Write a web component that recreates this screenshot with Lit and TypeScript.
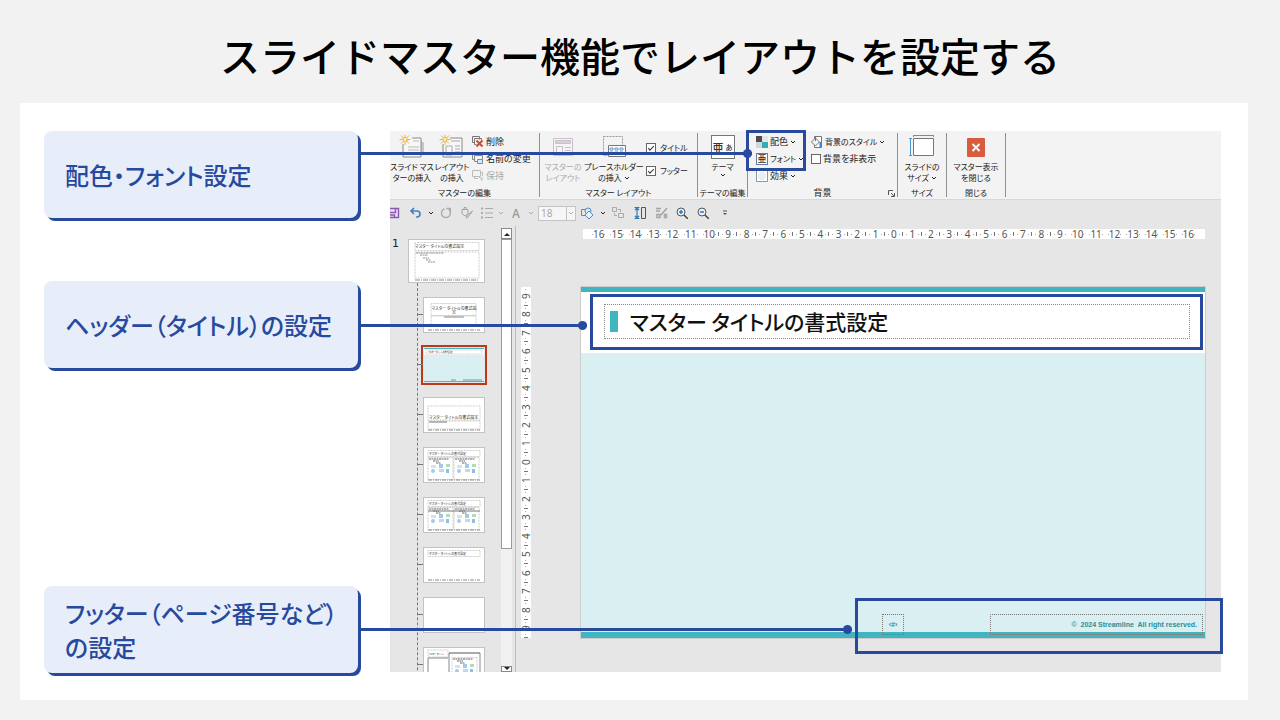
import { LitElement, html, svg, css } from "lit";
import { customElement } from "lit/decorators.js";

const chevron = () => html`<svg class="chev" viewBox="0 0 6 6" width="6" height="6"><path d="M1 2l2 2 2-2" fill="none" stroke="currentColor"/></svg>`;

const icons = {
  slideInsert: () => html`<svg viewBox="0 0 26 24" width="26" height="24">
    <path d="M7 5h15v14h2V7" fill="none" stroke="#999"/><path d="M4 9v13h18V3h-9" fill="#f7f7f7" stroke="#8a8a8a"/>
    <path d="M14 6h6M9 12h11M9 15h11M9 18h11" stroke="#bbb"/>${spark()}</svg>`,
  layoutInsert: () => html`<svg viewBox="0 0 26 24" width="26" height="24">
    <path d="M4 9v13h19V3H11" fill="#f7f7f7" stroke="#8a8a8a"/>
    <path d="M12 6h9M7 11h6v9H7zM16 11h5M16 14h5M16 17h5" stroke="#aaa" fill="none"/>${spark()}</svg>`,
  masterLayout: () => html`<svg viewBox="0 0 24 24" width="24" height="24" fill="none" stroke="#cbbfcd">
    <path d="M2.500 3.500h19v17h-19z" fill="#f7f4f7"/><path d="M4.500 5.500h15v3h-15z" fill="#d9d0da"/><path d="M5.500 11.500h6v7h-6zM14 12.500h6M14 15.500h6M14 18.500h6"/></svg>`,
  placeholder: () => html`<svg viewBox="0 0 26 24" width="26" height="24" fill="none">
    <path d="M2.500 1.500h19v19h-19z" stroke="#999" stroke-dasharray="2 1"/><path d="M7.500 10.500h17v11h-17z" fill="#fff" stroke="#777"/>
    <path d="M9 13h3v2H9zM14 13h3v2h-3zM19 13h3v2h-3zM9 17h3v2H9zM14 17h3v2h-3zM19 17h3v2h-3z" stroke="#5d9bd6"/></svg>`,
  slideSize: () => html`<svg viewBox="0 0 26 24" width="26" height="24" fill="none">
    <path d="M4.500 3.500h20v17h-20z" fill="#fff" stroke="#777"/><path d="M4.500.5h20M4.500 0v2M24.500 0v2M1.500 3v18M0 3.500h3M0 20.500h3" stroke="#4a97d2"/></svg>`,
  closeMaster: () => html`<svg viewBox="0 0 24 24" width="24" height="24">
    <rect x="3" y="3" width="18" height="19" rx="1" fill="#d95b3e"/><path d="M8.500 9l7 7M15.500 9l-7 7" stroke="#fff" stroke-width="2"/></svg>`,
  remove: () => html`<svg viewBox="0 0 12 12" width="12" height="12" fill="none"><path d="M.5.5h7v3M.5.5v6h2M2.500 2.500h7v2M2.500 2.500v6h2" stroke="#777"/>
    <path d="M4.500 4.500l6 6M10.500 4.500l-6 6" stroke="#d8492b" stroke-width="2"/></svg>`,
  rename: () => html`<svg viewBox="0 0 12 12" width="12" height="12" fill="none"><path d="M.5.5h7v2M.5.5v6h2M2.500 2.500h8v6h-8z" stroke="#888"/>
    <path d="M5.500 6.500h5v4h-5z" fill="#dbe8f6" stroke="#6a8db5"/></svg>`,
  keep: () => html`<svg viewBox="0 0 12 12" width="12" height="12" fill="none" stroke="#bbb"><path d="M.5.5h8v6h-8zM2.500 6.500v2H6M8.500 2.500h2V6M7 7l3 3M10 7v4"/></svg>`,
  colors: () => html`<svg viewBox="0 0 12 12" width="12" height="12"><path d="M.5.5h11v11H.5z" fill="#fff" stroke="#888"/>
    <path d="M0 0h6v6H0z" fill="#4c4c4c"/><path d="M6 0h6v6H6z" fill="#e4e4e4"/><path d="M0 6h6v6H0z" fill="#cfd9dc"/><path d="M6 6h6v6H6z" fill="#35adb9"/></svg>`,
  effects: () => html`<svg viewBox="0 0 12 12" width="12" height="12"><path d="M.5.5h11v11H.5z" fill="#fff" stroke="#8798ad"/><circle cx="6" cy="6" r="4" fill="#e6eff5"/></svg>`,
  bgStyle: () => html`<svg viewBox="0 0 12 12" width="12" height="12" fill="none" stroke="#777"><path d="M3.500.5h7v11h-7z" fill="#fff"/>
    <path d="M.5 6l4-4 4 4-4 4z" fill="#f4f4f4"/><path d="M4.500 5V1"/><path d="M9.500 6v5" stroke="#3b8ac9" stroke-width="2"/></svg>`,
};

function spark() {
  return svg`<path d="M6-1v11M.5 4.500h11M2 .5l8 8M10 .5l-8 8" stroke="#f0b43c"/><circle cx="6" cy="4.500" r="2" fill="#fff3d6" stroke="#f0b43c"/>`;
}

const tools = {
  save: svg`<path d="M0 1.500h8.500v9H0M0 5.500h5.500v-4M0 8h4.500v2.500" stroke="#8d55b5" stroke-width="1.400"/>`,
  undo: svg`<path d="M5 1L2 4l3 3M2 4h6a3 3 0 0 1 0 6H7" stroke="#3f7fc4" stroke-width="1.600"/>`,
  redo: svg`<path d="M4.500 1.800A4.500 4.500 0 1 0 9 2.800M6.500 1.500h4M10.300 1v4" stroke="#a8a8a8" stroke-width="1.300"/>`,
  format: svg`<path d="M1 2.500h6v4L4 9 1 6.500zM3 2.500V.5h2v2M11.500 4L7 10l-2 1 1-2.500z" stroke="#a4a4a4"/>`,
  list: svg`<path d="M4 1.500h8M4 6h8M4 10.500h8" stroke="#aaa"/><path d="M0 1.500h2M0 6h2M0 10.500h2" stroke="#aaa" stroke-width="2"/>`,
  shapes: svg`<path d="M.5 2.500h6v6h-6z" stroke="#4b8fcc"/><circle cx="7" cy="4" r="3" stroke="#4b8fcc" fill="#e6e6e6"/><path d="M8 4l4 4-4 4-4-4z" stroke="#4b8fcc" fill="#e9f1f8"/>`,
  group: svg`<path d="M.5.5h4v4h-4zM6.500 6.500h5v4h-5zM6 2.500h2.500V5M2.500 6v2.500H5" stroke="#aaa"/>`,
  align: svg`<path d="M.5.5h5M.5 11.500h5M3 1v10M1 3l2-2 2 2M1 9l2 2 2-2" stroke="#3578b5" stroke-width="1.200"/><path d="M7.500.5h4v11h-4z" stroke="#555"/>`,
  select: svg`<path d="M0 1.500h5M0 4h4M1 7.500h3v3H1zM8.500 7.500h2v3h-2zM11 1L5 8" stroke="#a4a4a4" stroke-width="1.500"/>`,
  zoomIn: svg`<circle cx="5" cy="5" r="4" stroke="#555" fill="#e8f1f9"/><path d="M8 8l4 4" stroke="#444" stroke-width="1.500"/><path d="M3 5h4M5 3v4" stroke="#2f79bd" stroke-width="1.500"/>`,
  zoomOut: svg`<circle cx="5" cy="5" r="4" stroke="#555" fill="#e8f1f9"/><path d="M8 8l4 4" stroke="#444" stroke-width="1.500"/><path d="M3 5h4" stroke="#2f79bd" stroke-width="1.500"/>`,
  more: svg`<path d="M4 4h4" stroke="#555"/><path d="M4 6h4l-2 2z" fill="#555"/>`,
};

const TITLE = "マスター タイトルの書式設定";

const contentBox = (x: number) => svg`
  <g transform="translate(${x} 0)"><rect x="0" y="9.500" width="25" height="22" class="ph"/>
  <path d="M1 11h20M5 13h6M8 15h5" stroke="#666" stroke-dasharray="2 .5"/>
  <g fill="#bcd9ee"><rect x="3" y="17" width="5" height="3" fill="#d7e3ec"/><rect x="11" y="16" width="4" height="4" fill="#9fcaea"/><rect x="18" y="16" width="4" height="3" fill="#b4dbb8"/>
  <circle cx="5" cy="23" r="2" fill="#a5c9ea"/><rect x="11" y="21" width="5" height="3"/><rect x="18" y="21" width="3" height="4" fill="#8dbfe8"/></g></g>`;

const footers = svg`<path d="M4 32h52" stroke="#888" stroke-dasharray="4 1 1 1"/>`;
const titleTop = svg`<rect x="4" y="2.500" width="52" height="6" class="ph"/><text x="5" y="7" font-size="3">${TITLE}</text>`;

const thumbs = [
  svg`<rect x="7" y="5.500" width="45" height="12" class="ph"/><text x="30" y="12" font-size="4" text-anchor="middle">マスター タイトルの書式設</text><text x="30" y="16" font-size="4" text-anchor="middle">定</text><path d="M20 19h20" stroke="#888"/><rect x="7" y="18" width="45" height="10" class="ph"/>${footers}`,
  svg`<rect width="60" height="34" fill="#daeff2"/><rect width="60" height="7" fill="#fff"/><path d="M0 .5h60M0 33.500h60" stroke="#49b7c1"/><rect x="2" y="2" width="56" height="4" class="ph"/><text x="4" y="5" font-size="2">${TITLE}</text><path d="M27 32h5M39 32h19" stroke="#679da1"/>`,
  svg`<rect x="4" y="8" width="52" height="14" class="ph"/><text x="5" y="21" font-size="4">${TITLE}</text><rect x="4" y="23" width="52" height="8" class="ph"/><path d="M5 24h18" stroke="#777"/>${footers}`,
  svg`${titleTop}${contentBox(4)}${contentBox(30)}${footers}`,
  svg`${titleTop}${contentBox(4)}${contentBox(30)}<path d="M4 13h52" stroke="#777"/>${footers}`,
  svg`${titleTop}${footers}`,
  svg`${footers}`,
  svg`<rect x="4" y="2" width="20" height="7" class="ph"/><text x="5" y="7" font-size="2">マスター タイトル</text><path d="M4 10h20M4 10v24M25 5v29M56 5v29" stroke="#888"/>${contentBox(28)}<path d="M25 5h31" stroke="#555"/>`,
];

@customElement("app-root")
export class AppRoot extends LitElement {
  static styles = css`
    :host {
      --navy: #27499e;
      --teal: #40b4bf;
      display: flex;
      flex-direction: column;
      min-height: 100vh;
      box-sizing: border-box;
      background: #f2f2f2;
      color: #000;
      font-family: "Noto Sans CJK JP", sans-serif;
      font-feature-settings: "palt";
    }
    *, *::before, *::after { box-sizing: border-box; }
    button, select { font: inherit; color: inherit; border: 0; background: none; padding: 0; margin: 0; font-feature-settings: inherit; }
    svg { flex: none; display: block; }
    h1 { margin: 0; padding: 25px 24px 18px; text-align: center; font-size: 40px; line-height: 60px; font-weight: 500; font-feature-settings: normal; }
    .card { flex: 1; display: flex; gap: 32px; margin: 0 32px 20px 20px; padding: 28px 27px 28px 24px; background: #fff; }
    .notes { flex: none; width: 314px; display: flex; flex-direction: column; gap: 63px; list-style: none; margin: 0; padding: 0; }
    .note { position: relative; min-height: 87px; display: flex; align-items: center; padding: 0 16px 0 21px; border-radius: 8px; background: #e7eefa; box-shadow: 3px 3px 0 var(--navy); color: var(--navy); font-size: 24px; line-height: 34px; font-weight: 500; white-space: nowrap; }
    .note.last { margin-top: auto; margin-bottom: -1px; }
    .wire { position: absolute; z-index: 3; left: 100%; height: 3px; background: var(--navy); }
    .wire::after { content: ""; position: absolute; right: 0; top: -3px; width: 9px; height: 9px; border-radius: 50%; background: var(--navy); }
    .wire.colors { top: 21px; width: 394px; }
    .wire.header { top: 43px; width: 229px; }
    .wire.footer { top: 42px; width: calc(100vw - 786px); }

    .app { flex: 1; min-width: 0; display: flex; flex-direction: column; background: #e6e6e6; color: #222; font-size: 8px; line-height: 11px; }
    .ribbon { display: flex; height: 69px; background: #f3f3f3; border-bottom: 1px solid #d8d8d8; }
    .group { position: relative; flex: none; display: flex; flex-direction: column; margin: 2px 0; border-right: 1px solid #919191; }
    .g1 { width: 150px; } .g2 { width: 158px; } .g3 { width: 50px; } .g4 { width: 150px; } .g5 { width: 49px; } .g6 { width: 59px; }
    .body { flex: 1; display: flex; }
    .caption { text-align: center; white-space: nowrap; height: 10px; }
    .big { flex: none; display: flex; flex-direction: column; align-items: center; gap: 2px; padding-top: 2px; white-space: nowrap; }
    .big .txt { display: flex; flex-direction: column; align-items: center; }
    .w38 { width: 36px; } .w42 { width: 44px; } .w46 { width: 46px; } .w56 { width: 56px; } .fill { width: 100%; }
    .off { color: #aaa; }
    .inline { display: flex; align-items: center; gap: 2px; }
    .rows { display: flex; flex-direction: column; padding-left: 2px; white-space: nowrap; }
    .row { height: 17px; display: flex; align-items: center; gap: 2px; }
    .kanji { font-size: 9px; }
    .checks { padding: 3px 0 0 4px; }
    .checks .row { height: 23px; gap: 4px; }
    .palette { width: 63px; padding-left: 8px; }
    .backdrop { padding-left: 0; }
    input[type="checkbox"] { appearance: none; flex: none; margin: 0; width: 10px; height: 10px; border: 1px solid #666; background: #fff; display: grid; place-items: center; }
    input[type="checkbox"]:checked::before { content: ""; width: 6px; height: 3px; border: solid #333; border-width: 0 0 1px 1px; transform: rotate(-45deg); }
    .frame { position: absolute; z-index: 2; border: 3px solid var(--navy); pointer-events: none; }
    .frame.colors { left: -2px; top: -3px; width: 60px; height: 41px; }
    .frame.footer { right: -18px; bottom: -22px; width: 368px; height: 56px; }
    .glyph { display: grid; place-items: center; border: 1px solid #777; background: #fff; color: #333; font-weight: 500; }
    .glyph.theme { width: 24px; height: 24px; grid-auto-flow: column; font-size: 11px; }
    .glyph.theme small { font-size: 7px; }
    .glyph.font { width: 12px; height: 12px; font-size: 9px; line-height: 9px; border-color: #5f7fa8; }
    .launch { position: absolute; right: 2px; bottom: 0; }

    .quick { display: flex; align-items: center; height: 26px; flex: none; }
    .tool { flex: none; display: grid; place-items: center; height: 20px; }
    .t10 { width: 10px; } .t14 { width: 14px; place-items: center start; } .t18 { width: 18px; } .t20 { width: 20px; } .t22 { width: 22px; } .t24 { width: 24px; }
    .letter { font-family: "Noto Sans", sans-serif; font-size: 12px; font-weight: 500; color: #999; }
    .size { display: flex; width: 38px; height: 15px; margin-left: 2px; border: 1px solid #c4c4c4; background: #f6f6f6; color: #aaa; align-items: center; }
    .size select { appearance: none; width: 28px; height: 13px; padding-left: 2px; font: 10px/13px "Noto Sans", sans-serif; border-right: 1px solid #c4c4c4; }
    .size svg { margin: 0 1px; }

    .work { flex: 1; min-height: 0; display: flex; }
    .panel { flex: none; width: 111px; height: 446px; display: flex; overflow: hidden; padding-top: 14px; }
    .num { width: 19px; padding-left: 2px; font-family: "DejaVu Sans", sans-serif; font-size: 11px; line-height: 8px; }
    .tree { display: flex; flex-direction: column; align-items: flex-end; gap: 16px; width: 75px; flex: none; position: relative; height: 600px; }
    .tree::before { content: ""; position: absolute; left: 8px; top: 43px; bottom: 0; border-left: 1px dashed #777; }
    .thumb { position: relative; display: block; width: 60px; height: 34px; background: #fff; outline: 1px solid #c3c3c3; }
    .thumb.master { width: 75px; height: 42px; }
    .thumb.sel { outline: 2px solid #bb3a1a; outline-offset: 1px; }
    .branch::before { content: ""; position: absolute; left: -7px; top: 16px; width: 6px; border-top: 1px dashed #777; }
    .thumb text { fill: #333; }
    .ph { fill: none; stroke: #999; stroke-width: .5; stroke-dasharray: 1 .5; }
    .scroll { flex: none; width: 11px; height: 446px; overflow: hidden; padding-top: 2px; display: flex; flex-direction: column; background: linear-gradient(#e6e6e6 2px, #f1f1f1 2px); }
    .arrow { flex: none; height: 11px; width: 11px; display: grid; place-items: center; border: 1px solid #888; background: #fff; }
    .grip { flex: none; height: 310px; border: 1px solid #999; background: #fff; }
    .arrow.down { margin-top: auto; height: 6px; overflow: hidden; }
    .split { flex: none; width: 4px; border-right: 1px solid #bbb; }
    .canvas { flex: 1; min-width: 0; display: grid; grid-template-columns: 10px minmax(0, 1fr); grid-template-rows: 10px auto; column-gap: 50px; row-gap: 48px; align-content: start; padding: 3px 16px 0 5px; }
    .hruler { grid-column: 2; display: flex; margin-left: 2px; padding: 0 7px; background: #fff; color: #555; font: 10px/10px "Noto Sans", sans-serif; }
    .hruler span, .vruler span { flex: 1 1 0; min-width: 0; display: flex; justify-content: space-between; align-items: center; white-space: nowrap; }
    .hruler i { width: 1px; height: 4px; background: #777; margin-left: -1px; }
    .hruler b, .vruler b { font-weight: 400; flex: 1; text-align: center; }
    .hruler u, .vruler u { background: #aaa; width: 1px; height: 1px; flex: none; }
    .hruler u:last-child { margin-right: 3px; }
    .hruler i + u { margin-left: 3px; }
    .vruler { writing-mode: vertical-rl; transform: rotate(180deg); display: flex; background: #fff; color: #555; font: 10px/10px "Noto Sans", sans-serif; text-align: center; }
    .vruler i { height: 1px; width: 4px; background: #777; }
    .vruler span { min-height: 0; }
    .vruler u { margin: 2px 0; }
    .slide { position: relative; aspect-ratio: 16 / 9; display: flex; flex-direction: column; background: #daeff2; border-top: 5px solid var(--teal); border-bottom: 6px solid var(--teal); box-shadow: 0 0 0 1px #cdcdcd; }
    .head { background: #fff; padding: 2px 2px 3px 9px; }
    .headframe { border: 3px solid var(--navy); padding: 7px 10px 8px 11px; }
    .title { display: flex; align-items: center; gap: 12px; height: 35px; margin: 0; padding-left: 5px; border: 1px dotted #888; color: #111; font-size: 21px; line-height: 33px; font-weight: 500; }
    .title::before { content: ""; width: 8px; height: 21px; background: var(--teal); }
    .foot { margin-top: auto; margin-bottom: -3px; display: flex; justify-content: flex-end; align-items: flex-end; gap: 86px; padding-right: 2px; color: #2d8d96; font: bold 7px/20px "Liberation Sans", sans-serif; position: relative; }
    .page, .copy { border: 1px dotted #777; height: 21px; white-space: pre; }
    .page { width: 22px; text-align: center; }
    .copy { width: 213px; text-align: right; padding-right: 5px; }
  `;

  private tool(label: string, size: string, body: unknown) {
    return html`<button class="tool ${size}" aria-label=${label}><svg viewBox="0 0 12 12" width="12" height="12" fill="none">${body}</svg></button>`;
  }

  private drop(label: string, off = false) {
    return html`<button class="tool t10 ${off ? "off" : ""}" aria-label=${label}>${chevron()}</button>`;
  }

  private cells(max: number) {
    return Array.from({ length: max * 2 + 1 }, (_, k) => Math.abs(k - max)).map(
      (n) => html`<span><i></i><u></u><b>${n}</b><u></u></span>`
    );
  }

  private ribbon() {
    return html`<div class="ribbon">
      <div class="group g1"><div class="body">
        <button class="big w42">${icons.slideInsert()}<span class="txt"><span>スライド マス</span><span>ターの挿入</span></span></button>
        <button class="big w38">${icons.layoutInsert()}<span class="txt"><span>レイアウト</span><span>の挿入</span></span></button>
        <div class="rows">
          <button class="row kanji">${icons.remove()}削除</button>
          <button class="row kanji">${icons.rename()}名前の変更</button>
          <button class="row kanji off">${icons.keep()}保持</button>
        </div></div><div class="caption">マスターの編集</div></div>
      <div class="group g2"><div class="body">
        <button class="big w46 off">${icons.masterLayout()}<span class="txt"><span>マスターの</span><span>レイアウト</span></span></button>
        <button class="big w56">${icons.placeholder()}<span class="txt"><span>プレースホルダー</span><span class="inline">の挿入 ${chevron()}</span></span></button>
        <div class="rows checks">
          <label class="row"><input type="checkbox" checked />タイトル</label>
          <label class="row"><input type="checkbox" checked />フッター</label>
        </div></div><div class="caption">マスター レイアウト</div></div>
      <div class="group g3"><div class="body">
        <button class="big fill"><span class="glyph theme">亜<small>あ</small></span><span class="txt"><span>テーマ</span>${chevron()}</span></button>
        </div><div class="caption">テーマの編集</div></div>
      <div class="group g4"><div class="body">
        <div class="rows palette">
          <button class="row kanji">${icons.colors()}配色 ${chevron()}</button>
          <button class="row"><span class="glyph font">亜</span>フォント${chevron()}</button>
          <button class="row kanji">${icons.effects()}効果 ${chevron()}</button>
        </div>
        <div class="rows backdrop">
          <button class="row">${icons.bgStyle()}背景のスタイル ${chevron()}</button>
          <label class="row kanji"><input type="checkbox" />背景を非表示</label>
        </div></div><div class="caption kanji">背景</div>
        <svg class="launch" viewBox="0 0 7 7" width="7" height="7" fill="none" stroke="#555"><path d="M.5 5V.5H5M3 3l3 3M6.500 3v3.500H3"/></svg>
        <div class="frame colors"></div></div>
      <div class="group g5"><div class="body">
        <button class="big fill">${icons.slideSize()}<span class="txt"><span>スライドの</span><span class="inline">サイズ ${chevron()}</span></span></button>
        </div><div class="caption">サイズ</div></div>
      <div class="group g6"><div class="body">
        <button class="big fill">${icons.closeMaster()}<span class="txt"><span>マスター表示</span><span>を閉じる</span></span></button>
        </div><div class="caption">閉じる</div></div>
    </div>`;
  }

  private quickbar() {
    return html`<div class="quick">
      ${this.tool("保存", "t14", tools.save)}${this.tool("元に戻す", "t22", tools.undo)}${this.drop("元に戻す一覧")}
      ${this.tool("やり直し", "t20", tools.redo)}${this.tool("書式", "t22", tools.format)}
      ${this.tool("箇条書き", "t18", tools.list)}${this.drop("箇条書き一覧", true)}
      <button class="tool t20 letter">A</button>${this.drop("文字の色", true)}
      <span class="size"><select aria-label="フォント サイズ"><option>18</option></select>${chevron()}</span>
      ${this.tool("図形", "t22", tools.shapes)}${this.drop("図形一覧")}
      ${this.tool("グループ", "t20", tools.group)}${this.tool("配置", "t24", tools.align)}${this.tool("選択", "t20", tools.select)}
      ${this.tool("拡大", "t20", tools.zoomIn)}${this.tool("縮小", "t22", tools.zoomOut)}${this.tool("その他", "t22", tools.more)}
    </div>`;
  }

  render() {
    return html`
      <h1>スライドマスター機能でレイアウトを設定する</h1>
      <main class="card">
        <ul class="notes">
          <li class="note">配色・フォント設定<span class="wire colors"></span></li>
          <li class="note">ヘッダー（タイトル）の設定<span class="wire header"></span></li>
          <li class="note last"><span>フッター（ページ番号など）<br />の設定</span><span class="wire footer"></span></li>
        </ul>
        <section class="app">
          ${this.ribbon()}${this.quickbar()}
          <div class="work">
            <div class="panel">
              <span class="num">1</span>
              <div class="tree">
                <button class="thumb master" aria-label="スライド マスター"><svg viewBox="0 0 75 42" width="75" height="42">
                  <rect x="6" y="2.500" width="64" height="8" class="ph"/><text x="6" y="8" font-size="4">${TITLE}</text>
                  <rect x="6" y="12" width="64" height="26" class="ph"/><path d="M7 13h28M11 15h8M14 18h6M17 20h5M19 22h7" stroke="#777" stroke-width=".8" stroke-dasharray="2 .5"/>
                  <path d="M6 40h64" stroke="#888" stroke-dasharray="5 1 1 1"/></svg></button>
                ${thumbs.map((t, k) => html`<button class="thumb branch ${k === 1 ? "sel" : ""}" aria-label="レイアウト"><svg viewBox="0 0 60 34" width="60" height="34">${t}</svg></button>`)}
              </div>
            </div>
            <div class="scroll">
              <button class="arrow" aria-label="上へ"><svg viewBox="0 0 6 4" width="6" height="4"><path d="M0 4l3-3 3 3z" fill="#222"/></svg></button>
              <div class="grip"></div>
              <button class="arrow down" aria-label="下へ"><svg viewBox="0 0 6 4" width="6" height="4"><path d="M0 0l3 3 3-3z" fill="#222"/></svg></button>
            </div>
            <div class="split"></div>
            <div class="canvas">
              <div class="hruler">${this.cells(16)}</div>
              <div class="vruler">${this.cells(9)}</div>
              <article class="slide">
                <div class="head"><div class="headframe"><h2 class="title">${TITLE}</h2></div></div>
                <div class="foot"><span class="page">‹#›</span><span class="copy">©  2024 Streamline  All right reserved.</span></div>
                <div class="frame footer"></div>
              </article>
            </div>
          </div>
        </section>
      </main>`;
  }
}
